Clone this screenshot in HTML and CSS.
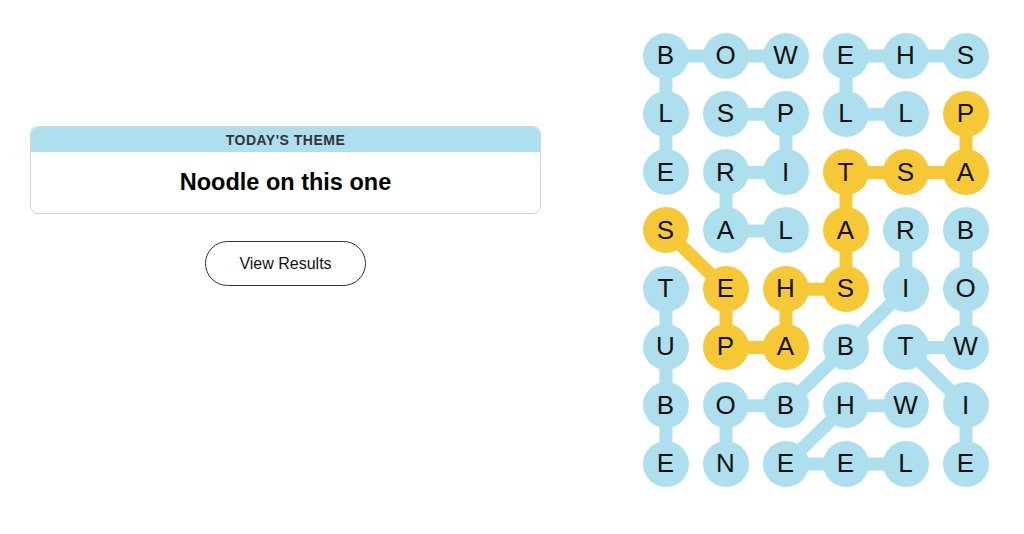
FILE: index.html
```html
<!DOCTYPE html>
<html lang="en">

<head>
  <meta charset="UTF-8">
  <meta name="viewport" content="width=device-width, initial-scale=1.0">
  <title>Strands</title>
  <link rel="stylesheet" href="styles.css">
</head>

<body>
  <main class="game">
    <section class="side">
      <div class="theme">
        <div class="theme-label">TODAY'S THEME</div>
        <div class="theme-clue">Noodle on this one</div>
      </div>
      <button class="results-btn">View Results</button>
    </section>

    <section class="board">
      <!-- word paths sit under the letter circles -->
      <svg class="paths" width="346" height="455" viewBox="0 0 346 455">
        <g class="path-found">
          <polyline points="23,139.6 23,23 143,23" />
          <polyline points="323,23 203,23 203,81.3 263,81.3" />
          <polyline points="83,81.3 143,81.3 143,139.6 83,139.6 83,197.9 143,197.9" />
          <polyline points="263,197.9 263,256.2 203,314.5 143,372.8 83,372.8 83,431.1" />
          <polyline points="323,197.9 323,314.5 263,314.5 323,372.8 323,431.1" />
          <polyline points="23,256.2 23,431.1" />
          <polyline points="263,372.8 203,372.8 143,431.1 263,431.1" />
        </g>
        <g class="path-spangram">
          <polyline points="323,81.3 323,139.6 203,139.6 203,256.2 143,256.2 143,314.5 83,314.5 83,256.2 23,197.9" />
        </g>
      </svg>

      <div class="grid">
        <span class="cell">B</span><span class="cell">O</span><span class="cell">W</span><span class="cell">E</span><span class="cell">H</span><span class="cell">S</span>
        <span class="cell">L</span><span class="cell">S</span><span class="cell">P</span><span class="cell">L</span><span class="cell">L</span><span class="cell span">P</span>
        <span class="cell">E</span><span class="cell">R</span><span class="cell">I</span><span class="cell span">T</span><span class="cell span">S</span><span class="cell span">A</span>
        <span class="cell span">S</span><span class="cell">A</span><span class="cell">L</span><span class="cell span">A</span><span class="cell">R</span><span class="cell">B</span>
        <span class="cell">T</span><span class="cell span">E</span><span class="cell span">H</span><span class="cell span">S</span><span class="cell">I</span><span class="cell">O</span>
        <span class="cell">U</span><span class="cell span">P</span><span class="cell span">A</span><span class="cell">B</span><span class="cell">T</span><span class="cell">W</span>
        <span class="cell">B</span><span class="cell">O</span><span class="cell">B</span><span class="cell">H</span><span class="cell">W</span><span class="cell">I</span>
        <span class="cell">E</span><span class="cell">N</span><span class="cell">E</span><span class="cell">E</span><span class="cell">L</span><span class="cell">E</span>
      </div>
    </section>
  </main>
</body>

</html>
```

FILE: styles.css
```css
body {
  margin: 0;
  padding: 0;
  background: #fff;
  color: #121212;
  font-family: "Liberation Sans", Arial, sans-serif;
}

.game {
  display: flex;
  align-items: flex-start;
  padding: 32.5px 0 0 30px;
  gap: 101.5px;
}

/* left column: theme card + button */

.side {
  width: 511px;
  margin-top: 93.5px;
  display: flex;
  flex-direction: column;
  align-items: center;
}

.theme {
  width: 100%;
  box-sizing: border-box;
  border: 1px solid #d4d4d4;
  border-radius: 8px;
  overflow: hidden;
  text-align: center;
}

.theme-label {
  background: #aedfee;
  height: 25px;
  line-height: 26px;
  font-size: 14px;
  font-weight: bold;
  letter-spacing: 0.5px;
  color: #333;
}

.theme-clue {
  height: 61px;
  line-height: 60px;
  font-size: 23.5px;
  font-weight: bold;
  color: #000;
}

.results-btn {
  margin-top: 27px;
  width: 161px;
  height: 45px;
  background: #fff;
  border: 1px solid #333;
  border-radius: 999px;
  font-family: inherit;
  font-size: 16px;
  color: #121212;
  cursor: pointer;
}

/* board */

.board {
  position: relative;
  width: 346px;
}

.paths {
  position: absolute;
  top: 0;
  left: 0;
}

.paths polyline {
  fill: none;
  stroke-width: 13;
  stroke-linejoin: round;
}

.path-found polyline {
  stroke: #aedfee;
}

.path-spangram polyline {
  stroke: #f6c836;
}

.grid {
  position: relative;
  display: grid;
  grid-template-columns: repeat(6, 46px);
  grid-auto-rows: 46px;
  column-gap: 14px;
  row-gap: 12.3px;
}

.cell {
  display: flex;
  align-items: center;
  justify-content: center;
  border-radius: 50%;
  background: #aedfee;
  font-size: 26px;
  color: #121212;
}

.cell.span {
  background: #f6c836;
}
```
